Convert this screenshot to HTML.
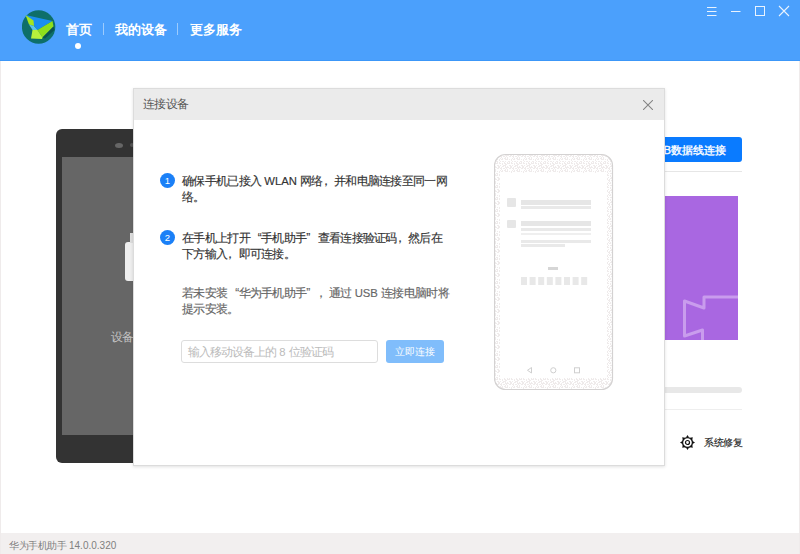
<!DOCTYPE html>
<html><head><meta charset="utf-8">
<style>
*{margin:0;padding:0;box-sizing:border-box}
html,body{width:800px;height:554px;overflow:hidden;background:#fff;font-family:"Liberation Sans",sans-serif;position:relative}
.abs{position:absolute}
#hdr{left:0;top:0;width:800px;height:61px;background:#4ba0fc;border-bottom:1px solid #3c97f8}
.nav{top:21px;height:18px;font-size:13px;font-weight:bold;color:#fff;line-height:18px;white-space:nowrap}
.sep{top:23px;width:1px;height:12px;background:rgba(255,255,255,.45)}
#dot{left:75px;top:43px;width:6px;height:6px;border-radius:50%;background:#fff}
.wc{top:0;height:25px}
#phone{left:56px;top:129px;width:130px;height:334px;background:#333;border-radius:6px}
#screen{left:62px;top:157px;width:118px;height:278px;background:#666}
#usb{left:560px;top:137px;width:182px;height:25px;background:#0a7bff;border-radius:3px;color:#fff;font-size:11.3px;font-weight:normal;-webkit-text-stroke:.35px #fff;line-height:26px;text-align:right;padding-right:16px}
#div1{left:560px;top:171px;width:182px;height:1px;background:#e6e6e6}
#purple{left:600px;top:196px;width:138px;height:144px;background:#a967e1;overflow:hidden}
#prog{left:560px;top:387px;width:182px;height:6px;background:#e8e8e8;border-radius:3px}
#div2{left:560px;top:409px;width:182px;height:1px;background:#eee}
#repair{left:704px;top:437px;font-size:10px;font-weight:normal;color:#1a1a1a;-webkit-text-stroke:.12px #1a1a1a;letter-spacing:-.3px;line-height:12px;white-space:nowrap}
#status{left:0;top:533px;width:800px;height:21px;background:#f2efef}
#stxt{left:9px;top:539px;font-size:10px;color:#808080;letter-spacing:-.4px;line-height:14px;white-space:nowrap}
#dlg{left:133px;top:88px;width:532px;height:378px;background:#fff;box-shadow:0 1px 3px rgba(0,0,0,.12)}
#dbrd{left:0;top:0;width:532px;height:378px;border:1px solid #dcdcdc;pointer-events:none}
#dhd{left:0;top:0;width:532px;height:32px;background:#ebebeb}
#dtitle{left:10px;top:9px;font-size:12px;letter-spacing:-.7px;color:#555;line-height:14px;white-space:nowrap}
.num{width:15px;height:15px;border-radius:50%;background:#1b80f7;color:#fff;font-size:9.5px;font-weight:normal;text-align:center;line-height:15px}
.p{font-size:12px;line-height:16px;color:#333;white-space:nowrap;letter-spacing:-.7px;-webkit-text-stroke:.15px currentColor}
.ls0{letter-spacing:0;font-size:11.3px}
.fc{position:relative;left:-3px}
.lq,.rq{display:inline-block;width:11.3px}.lq{text-align:right}.rq{text-align:left}
#inp{left:48px;top:252px;width:197px;height:23px;border:1px solid #ddd;border-radius:3px}
#ph{left:55px;top:258px;font-size:12px;letter-spacing:-1px;color:#bbb;line-height:12px;white-space:nowrap}
#btn{left:253px;top:252px;width:58px;height:23px;background:#80bdfb;border-radius:3px;color:#fff;font-size:10px;line-height:23px;text-align:center}
</style></head>
<body>
<div id="hdr" class="abs"></div>
<svg class="abs" style="left:22px;top:10px" width="34" height="34" viewBox="0 0 34 34">
  <circle cx="16.6" cy="17" r="16.7" fill="#0e6f69"/>
  <polygon points="3.5,5 30.5,11 15.5,20" fill="#1a8ef0"/>
  <polygon points="30.5,11 31.5,16.5 20.5,27.5 15.5,20" fill="#8ede1c"/>
  <polygon points="31.5,16.5 32.5,20 23,28.5 20.5,27.5" fill="#0a5350"/>
  <polygon points="3.5,5 11.5,10.5 12,16 7,14.5" fill="#a6e61e"/>
  <polygon points="7,14.5 12,16 15.5,20 10.5,20" fill="#5cc4ea"/>
  <polygon points="9,28.5 10.5,20 15.5,20 20.5,27.5 20,29" fill="#b7f23c"/>
</svg>
<div class="abs nav" style="left:66px">首页</div>
<div class="abs sep" style="left:103px"></div>
<div class="abs nav" style="left:115px">我的设备</div>
<div class="abs sep" style="left:177px"></div>
<div class="abs nav" style="left:190px">更多服务</div>
<div id="dot" class="abs"></div>
<svg class="abs" style="left:700px;top:0" width="100" height="25" viewBox="0 0 100 25">
  <g stroke="#fff" stroke-width="1" fill="none" opacity=".88">
    <path d="M7 7.5H16.5M7 11.5H16.5M7 15.5H16.5"/>
    <path d="M31 11.5H40.5"/>
    <rect x="55.5" y="6.5" width="9" height="9"/>
    <path d="M79 6L89 16M89 6L79 16" stroke-width="1.1"/>
  </g>
</svg>

<div id="phone" class="abs"></div>
<div class="abs" style="left:115px;top:143px;width:8px;height:5px;border-radius:50%;background:#666"></div>
<div class="abs" style="left:130px;top:143px;width:4px;height:4px;border-radius:50%;background:#555"></div>
<div id="screen" class="abs"></div>
<div class="abs" style="left:125px;top:242px;width:20px;height:39px;background:#eee;border-radius:3px"></div>
<div class="abs" style="left:130px;top:233px;width:10px;height:10px;background:#ddd"></div>
<div class="abs" style="left:111px;top:330px;font-size:12px;letter-spacing:-.7px;color:#c4c4c4;line-height:14px">设备</div>

<div id="usb" class="abs">USB数据线连接</div>
<div id="div1" class="abs"></div>
<div id="purple" class="abs">
  <svg width="138" height="144" viewBox="600 196 138 144" style="position:absolute;left:0;top:0">
    <path d="M738 297H704V308L684.5 301V336L702.5 330V340" stroke="#c99ced" stroke-width="3" fill="none" stroke-linejoin="round"/>
  </svg>
</div>
<div id="prog" class="abs"></div>
<div id="div2" class="abs"></div>
<svg class="abs" style="left:680px;top:435px" width="15" height="15" viewBox="0 0 15 15">
  <g fill="#111"><polygon points="5.93,2.44 7.50,0.00 9.07,2.44"/><polygon points="9.97,2.81 12.80,2.20 12.19,5.03"/><polygon points="12.56,5.93 15.00,7.50 12.56,9.07"/><polygon points="12.19,9.97 12.80,12.80 9.97,12.19"/><polygon points="9.07,12.56 7.50,15.00 5.93,12.56"/><polygon points="5.03,12.19 2.20,12.80 2.81,9.97"/><polygon points="2.44,9.07 0.00,7.50 2.44,5.93"/><polygon points="2.81,5.03 2.20,2.20 5.03,2.81"/></g>
  <circle cx="7.5" cy="7.5" r="4.95" fill="none" stroke="#111" stroke-width="1.3"/>
  <circle cx="7.5" cy="7.5" r="2.0" fill="none" stroke="#111" stroke-width="1.2"/>
</svg>
<div id="repair" class="abs">系统修复</div>

<div id="status" class="abs"></div>
<div class="abs" style="left:0;top:61px;width:1px;height:493px;background:#efebeb"></div>
<div class="abs" style="left:799px;top:61px;width:1px;height:493px;background:#efebeb"></div>
<div id="stxt" class="abs">华为手机助手 <span style="letter-spacing:0">14.0.0.320</span></div>

<div id="dlg" class="abs">
  <div id="dhd" class="abs"></div>
  <div id="dbrd" class="abs"></div>
  <div id="dtitle" class="abs">连接设备</div>
  <svg class="abs" style="left:510px;top:12px" width="10" height="10" viewBox="0 0 10 10"><path d="M0 0L10 10M10 0L0 10" stroke="#858585" stroke-width="1.05"/></svg>

  <div class="abs num" style="left:27px;top:85px">1</div>
  <div class="abs p" style="left:49px;top:85px">确保手机已接入<span class="ls0"> WLAN </span>网络<span class="fc">，</span>并和电脑连接至同一网<br>络。</div>
  <div class="abs num" style="left:27px;top:142px">2</div>
  <div class="abs p" style="left:49px;top:142px">在手机上打开<span class="lq">“</span>手机助手<span class="rq">”</span>查看连接验证码<span class="fc">，</span>然后在<br>下方输入<span class="fc">，</span>即可连接。</div>
  <div class="abs p" style="left:49px;top:197px;color:#666">若未安装<span class="lq">“</span>华为手机助手<span class="rq">”</span><span class="fc">，</span>通过<span class="ls0"> USB </span>连接电脑时将<br>提示安装。</div>
  <div id="inp" class="abs"></div>
  <div id="ph" class="abs">输入移动设备上的<span class="ls0"> 8 </span>位验证码</div>
  <div id="btn" class="abs">立即连接</div>
  <svg class="abs" style="left:361px;top:65px" width="121" height="238" viewBox="494 153 121 238">
    <defs>
      <pattern id="dith" width="12" height="12" patternUnits="userSpaceOnUse"><rect width="12" height="12" fill="#fff"/><g fill="#efebeb"><rect x="0" y="0" width="1" height="1"/><rect x="2" y="0" width="1" height="1"/><rect x="5" y="0" width="1" height="1"/><rect x="6" y="0" width="1" height="1"/><rect x="8" y="0" width="1" height="1"/><rect x="9" y="0" width="1" height="1"/><rect x="11" y="0" width="1" height="1"/><rect x="1" y="1" width="1" height="1"/><rect x="3" y="1" width="1" height="1"/><rect x="9" y="1" width="1" height="1"/><rect x="0" y="2" width="1" height="1"/><rect x="1" y="2" width="1" height="1"/><rect x="3" y="2" width="1" height="1"/><rect x="8" y="2" width="1" height="1"/><rect x="10" y="2" width="1" height="1"/><rect x="1" y="3" width="1" height="1"/><rect x="2" y="3" width="1" height="1"/><rect x="3" y="3" width="1" height="1"/><rect x="5" y="3" width="1" height="1"/><rect x="7" y="3" width="1" height="1"/><rect x="9" y="3" width="1" height="1"/><rect x="10" y="3" width="1" height="1"/><rect x="7" y="4" width="1" height="1"/><rect x="1" y="5" width="1" height="1"/><rect x="4" y="5" width="1" height="1"/><rect x="5" y="5" width="1" height="1"/><rect x="8" y="5" width="1" height="1"/><rect x="10" y="5" width="1" height="1"/><rect x="11" y="5" width="1" height="1"/><rect x="0" y="6" width="1" height="1"/><rect x="3" y="6" width="1" height="1"/><rect x="5" y="6" width="1" height="1"/><rect x="7" y="6" width="1" height="1"/><rect x="0" y="7" width="1" height="1"/><rect x="1" y="7" width="1" height="1"/><rect x="3" y="7" width="1" height="1"/><rect x="4" y="7" width="1" height="1"/><rect x="5" y="7" width="1" height="1"/><rect x="7" y="7" width="1" height="1"/><rect x="8" y="7" width="1" height="1"/><rect x="10" y="7" width="1" height="1"/><rect x="1" y="8" width="1" height="1"/><rect x="2" y="8" width="1" height="1"/><rect x="10" y="8" width="1" height="1"/><rect x="0" y="9" width="1" height="1"/><rect x="1" y="9" width="1" height="1"/><rect x="5" y="9" width="1" height="1"/><rect x="6" y="9" width="1" height="1"/><rect x="8" y="9" width="1" height="1"/><rect x="11" y="9" width="1" height="1"/><rect x="1" y="10" width="1" height="1"/><rect x="3" y="10" width="1" height="1"/><rect x="6" y="10" width="1" height="1"/><rect x="7" y="10" width="1" height="1"/><rect x="10" y="10" width="1" height="1"/><rect x="11" y="10" width="1" height="1"/><rect x="1" y="11" width="1" height="1"/><rect x="2" y="11" width="1" height="1"/><rect x="3" y="11" width="1" height="1"/><rect x="4" y="11" width="1" height="1"/><rect x="6" y="11" width="1" height="1"/><rect x="7" y="11" width="1" height="1"/><rect x="9" y="11" width="1" height="1"/></g></pattern>
    </defs>
    <rect x="494.5" y="154.5" width="118" height="235" rx="11" fill="url(#dith)" stroke="#d4d2d2" stroke-width="1.2"/>
    <rect x="500" y="173" width="107" height="205" fill="#fff"/>
    <rect x="507" y="198" width="9" height="9" rx="1" fill="#e6e6e6"/>
    <rect x="521" y="200" width="70" height="5" fill="#e6e6e6"/>
    <rect x="521" y="206" width="70" height="3" fill="#e9e9e9"/>
    <rect x="507" y="220" width="9" height="8" rx="1" fill="#e6e6e6"/>
    <rect x="521" y="221" width="70" height="5" fill="#e6e6e6"/>
    <rect x="521" y="228" width="70" height="3" fill="#e9e9e9"/>
    <rect x="521" y="233" width="70" height="2" fill="#efefef"/>
    <rect x="521" y="240" width="70" height="3" fill="#e9e9e9"/>
    <rect x="521" y="244" width="44" height="3" fill="#e9e9e9"/>
    <rect x="548" y="267" width="10" height="3" fill="#d6d6d6"/>
    <g fill="#e8e8e8">
      <rect x="521" y="277" width="6" height="8"/>
      <rect x="529.6" y="277" width="6" height="8"/>
      <rect x="538.2" y="277" width="6" height="8"/>
      <rect x="546.8" y="277" width="6" height="8"/>
      <rect x="555.4" y="277" width="6" height="8"/>
      <rect x="564" y="277" width="6" height="8"/>
      <rect x="572.6" y="277" width="6" height="8"/>
      <rect x="581.2" y="277" width="6" height="8"/>
    </g>
    <g fill="none" stroke="#cfcfcf" stroke-width="1">
      <path d="M531.5 367.5L527.5 370.3L531.5 373Z"/>
      <circle cx="553.3" cy="370.3" r="2.6"/>
      <rect x="574.5" y="367.8" width="5" height="5"/>
    </g>
  </svg>
</div>
</body></html>
